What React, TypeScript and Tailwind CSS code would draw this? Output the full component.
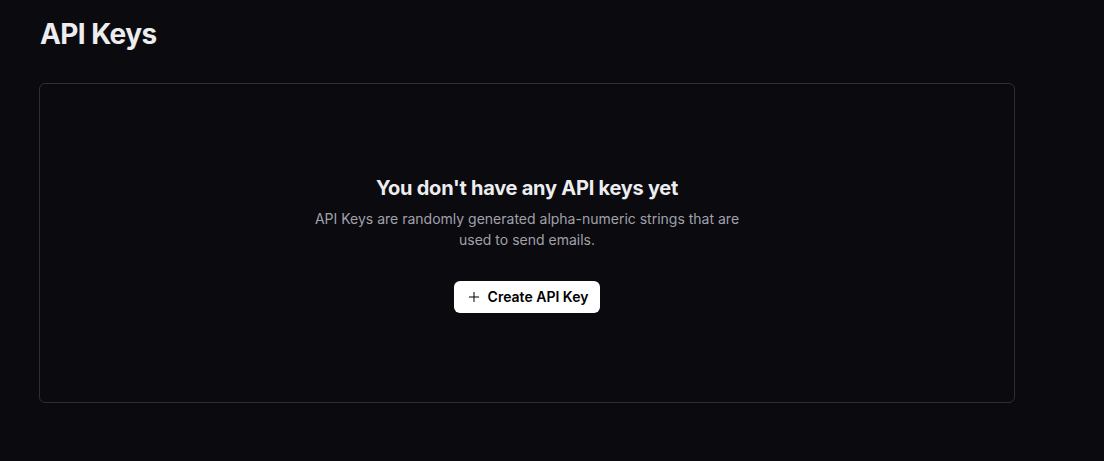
import React from 'react';
import { Plus } from 'lucide-react';

export default function App() {
  return (
    <div className="min-h-[461px] bg-[#0a0a0f] px-[39px] pt-4 font-['Inter',sans-serif] text-white">
      <h1 className="pl-px text-[28px] font-bold leading-[36px] tracking-[-0.6px] text-[#ededef]">API Keys</h1>

      <div className="mt-[31px] flex h-[320px] w-[976px] flex-col items-center justify-center rounded-md border border-[#2e2e33] text-center">
        <h2 className="text-[20px] font-bold leading-7 tracking-[-0.25px] text-[#ededef]">You don't have any API keys yet</h2>
        <p className="mt-[6px] max-w-[440px] text-sm leading-[21px] text-[#a1a1aa]">
          API Keys are randomly generated alpha-numeric strings that are used to send emails.
        </p>
        <button className="mt-[31px] flex h-8 items-center gap-1.5 rounded-md bg-white px-3 text-sm font-semibold text-black">
          <Plus className="h-4 w-4" strokeWidth={1.5} />
          Create API Key
        </button>
      </div>
    </div>
  );
}
